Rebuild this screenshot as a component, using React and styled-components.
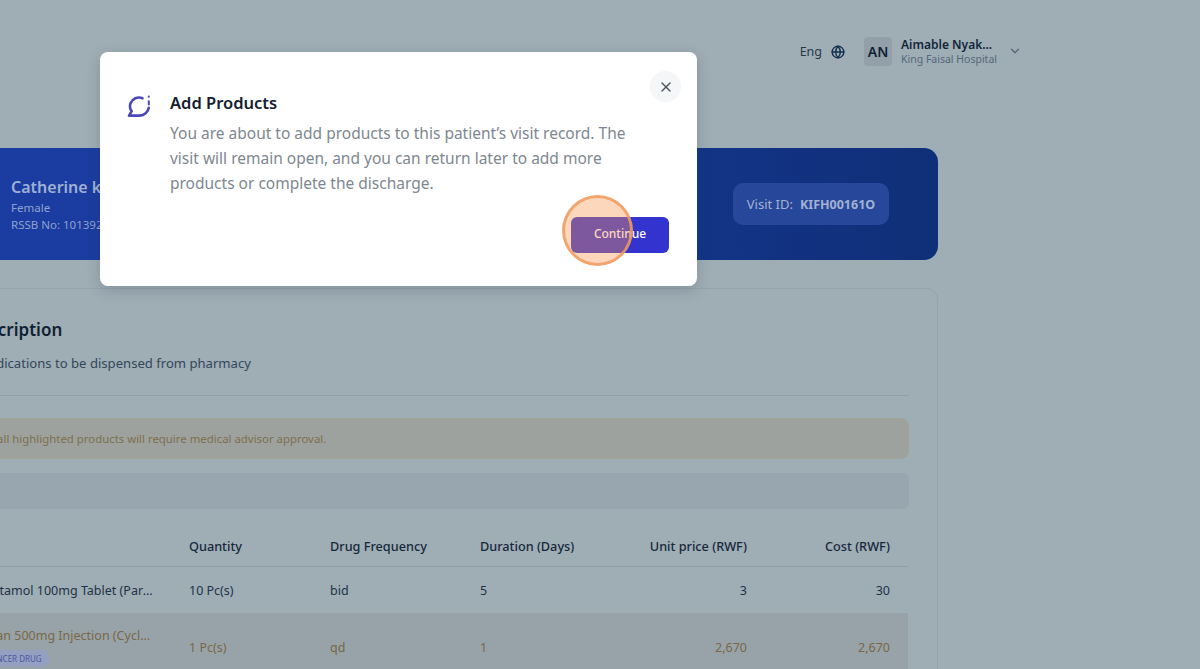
import React from 'react';
import styled, { createGlobalStyle } from 'styled-components';
import { ChevronDown, Globe, X } from 'lucide-react';

const GlobalStyle = createGlobalStyle`
	html, body {
		margin: 0;
		padding: 0;
		height: 100%;
	}
	body {
		font-family: "Noto Sans", "Open Sans", sans-serif;
		background: #9fadb5;
		overflow: hidden;
	}
	* {
		box-sizing: border-box;
	}
`;

const Page = styled.div`
	position: relative;
	width: 1200px;
	height: 669px;
	overflow: hidden;
	background: #9fadb5;
`;

const TopBar = styled.header`
	height: 148px;
	display: flex;
	justify-content: flex-end;
	align-items: flex-start;
	padding: 37px 178px 0 0;
`;

const LangPicker = styled.div`
	display: flex;
	align-items: center;
	gap: 9px;
	height: 29px;
	margin-right: 19px;
	font-size: 12.5px;
	color: #27394a;
	svg {
		color: #14304f;
	}
`;

const Avatar = styled.div`
	width: 28px;
	height: 29px;
	border-radius: 4px;
	background: #939fa9;
	color: #0f2233;
	font-size: 14px;
	font-weight: 600;
	display: flex;
	align-items: center;
	justify-content: center;
	margin-right: 9px;
`;

const UserInfo = styled.div`
	display: flex;
	flex-direction: column;
	width: 103px;
	margin-right: 4px;
`;

const UserName = styled.div`
	font-size: 12px;
	font-weight: 600;
	line-height: 15px;
	color: #12263a;
`;

const UserOrg = styled.div`
	font-size: 10.5px;
	line-height: 15px;
	color: #55677a;
`;

const Chevron = styled(ChevronDown)`
	margin-top: 7px;
	color: #4f6172;
`;

const Main = styled.main`
	width: 1028px;
	margin-left: -90px;
`;

const Banner = styled.section`
	height: 112px;
	border-radius: 0 14px 14px 0;
	background: linear-gradient(90deg, #1b3da3 0%, #1a3b9c 40%, #0f2f78 100%);
	display: flex;
	align-items: center;
	justify-content: space-between;
	padding: 0 49px 0 101px;
`;

const Patient = styled.div`
	display: flex;
	flex-direction: column;
`;

const PatientName = styled.div`
	font-size: 16px;
	font-weight: 600;
	line-height: 24px;
	color: #9fb0d4;
`;

const PatientMeta = styled.div`
	font-size: 11.5px;
	line-height: 17px;
	color: #8fa2cc;
`;

const VisitPill = styled.div`
	width: 156px;
	height: 42px;
	border-radius: 10px;
	background: #27479a;
	display: flex;
	align-items: center;
	justify-content: center;
	gap: 7px;
	font-size: 13px;
	color: #a3b2d2;
	b {
		font-size: 12.5px;
		font-weight: 700;
	}
`;

const Card = styled.section`
	margin-top: 28px;
	height: 420px;
	border: 1px solid #95a4ad;
	border-radius: 12px;
	padding: 0 28px 0 27px;
`;

const CardHead = styled.div`
	padding: 28px 0 22px 24px;
	border-bottom: 1px solid #8f9ea8;
	margin-bottom: 22px;
`;

const CardTitle = styled.h2`
	margin: 0;
	font-size: 17px;
	line-height: 25px;
	font-weight: 600;
	color: #0f2233;
`;

const CardText = styled.p`
	margin: 11px 0 0 -4px;
	font-size: 13.1px;
	line-height: 20px;
	color: #33485a;
`;

const Alert = styled.div`
	height: 41px;
	border: 1px solid #a2a593;
	border-radius: 8px;
	background: #9da29f;
	display: flex;
	align-items: center;
	padding-left: 26px;
	font-size: 11.4px;
	color: #7f6f4c;
`;

const FilterBar = styled.div`
	height: 36px;
	margin-top: 14px;
	border-radius: 6px;
	background: #98a7af;
`;

const TableRow = styled.div`
	display: grid;
	grid-template-columns: 233px 141px 150px 150px 153px 143px;
	align-items: center;
	width: 970px;
	height: ${(p) => p.$height}px;
	border-bottom: ${(p) => (p.$line ? '1px solid #8f9ea8' : 'none')};
	background: ${(p) => (p.$flagged ? '#98a3a9' : 'transparent')};
	color: ${(p) => (p.$flagged ? '#786845' : '#1f3346')};
`;

const HeadCell = styled.div`
	padding: 17px 18px 0;
	font-size: 12.7px;
	font-weight: 500;
	color: #16293b;
	text-align: ${(p) => (p.$right ? 'right' : 'left')};
`;

const Cell = styled.div`
	padding: 0 18px;
	font-size: 12.5px;
	text-align: ${(p) => (p.$right ? 'right' : 'left')};
`;

const ProductCell = styled.div`
	padding: 0 18px 0 22px;
	font-size: 12.5px;
	min-width: 0;
	display: flex;
	flex-direction: column;
	align-items: flex-start;
	gap: 6px;
`;

const ProductName = styled.span`
	display: block;
	width: 100%;
	white-space: nowrap;
	overflow: hidden;
	text-overflow: ellipsis;
`;

const DrugTag = styled.span`
	height: 17px;
	padding: 0 8px;
	border-radius: 9px;
	background: #959fc0;
	color: #4d57a3;
	font-size: 8px;
	line-height: 17px;
	white-space: nowrap;
`;

const Modal = styled.div`
	position: absolute;
	left: 100px;
	top: 52px;
	width: 597px;
	height: 234px;
	background: #fff;
	border-radius: 8px;
	box-shadow: 0 4px 14px rgba(40, 55, 70, 0.22);
	display: flex;
	padding: 39px 28px 0 27px;
`;

const ModalIcon = styled.div`
	flex: none;
	width: 43px;
	padding-top: 3px;
	color: #4b48b5;
`;

const ModalBody = styled.div`
	flex: 1;
	display: flex;
	flex-direction: column;
`;

const ModalTitle = styled.h3`
	margin: 0 0 6px;
	font-size: 16.5px;
	line-height: 24px;
	font-weight: 600;
	color: #14202e;
`;

const ModalText = styled.p`
	margin: 0;
	width: 470px;
	font-size: 15.5px;
	line-height: 25px;
	color: #7e8790;
`;

const ModalActions = styled.div`
	display: flex;
	justify-content: flex-end;
	margin-top: 21px;
`;

const CloseButton = styled.button`
	position: absolute;
	top: 19px;
	right: 16px;
	width: 31px;
	height: 31px;
	padding: 0;
	border: none;
	border-radius: 50%;
	background: #f5f6f7;
	color: #4a5560;
	display: flex;
	align-items: center;
	justify-content: center;
`;

const PrimaryButton = styled.button`
	width: 98px;
	height: 36px;
	padding: 0 0 3px;
	border: none;
	border-radius: 6px;
	background: #3333cf;
	color: #fff;
	font-family: inherit;
	font-size: 12px;
	font-weight: 500;
`;

const ClickHighlight = styled.div`
	position: absolute;
	left: 562px;
	top: 195px;
	width: 71px;
	height: 71px;
	border-radius: 50%;
	border: 3px solid rgba(240, 155, 95, 0.85);
	background: rgba(250, 150, 80, 0.38);
	pointer-events: none;
`;

const ChatInfoIcon = () => (
	<svg width="24" height="24" viewBox="0 0 24 24" fill="none" stroke="currentColor" strokeWidth="2.6" strokeLinecap="round" strokeLinejoin="round">
		<path d="M15.5 4.2A9.2 9.2 0 0 0 3.4 9.5c-.9 2.8-.3 5.6 1.3 7.6L2 21.6h10.6c4.6-.2 8.5-3.4 9.2-7.8" />
		<path d="M21.8 7.2v3.2" strokeWidth="2" />
		<path d="M21.8 2.4v.4" strokeWidth="2" />
	</svg>
);

const App = () => {
	return (
		<Page>
			<GlobalStyle />
			<TopBar>
				<LangPicker>
					Eng
					<Globe size={14} strokeWidth={2.4} />
				</LangPicker>
				<Avatar>AN</Avatar>
				<UserInfo>
					<UserName>Aimable Nyak...</UserName>
					<UserOrg>King Faisal Hospital</UserOrg>
				</UserInfo>
				<Chevron size={14} />
			</TopBar>

			<Main>
				<Banner>
					<Patient>
						<PatientName>Catherine kayitesi</PatientName>
						<PatientMeta>Female</PatientMeta>
						<PatientMeta>RSSB No: 10139201</PatientMeta>
					</Patient>
					<VisitPill>
						Visit ID: <b>KIFH00161O</b>
					</VisitPill>
				</Banner>

				<Card>
					<CardHead>
						<CardTitle>Prescription</CardTitle>
						<CardText>All medications to be dispensed from pharmacy</CardText>
					</CardHead>
					<Alert>Note: all highlighted products will require medical advisor approval.</Alert>
					<FilterBar />
					<TableRow $height={58} $line>
						<HeadCell>Drug</HeadCell>
						<HeadCell>Quantity</HeadCell>
						<HeadCell>Drug Frequency</HeadCell>
						<HeadCell>Duration (Days)</HeadCell>
						<HeadCell $right>Unit price (RWF)</HeadCell>
						<HeadCell $right>Cost (RWF)</HeadCell>
					</TableRow>
					<TableRow $height={46}>
						<ProductCell>
							<ProductName>Paracetamol 100mg Tablet (Paracetamol)</ProductName>
						</ProductCell>
						<Cell>10 Pc(s)</Cell>
						<Cell>bid</Cell>
						<Cell>5</Cell>
						<Cell $right>3</Cell>
						<Cell $right>30</Cell>
					</TableRow>
					<TableRow $height={68} $flagged>
						<ProductCell>
							<ProductName>Endoxan 500mg Injection (Cyclophosphamide)</ProductName>
							<DrugTag>ANTICANCER DRUG</DrugTag>
						</ProductCell>
						<Cell>1 Pc(s)</Cell>
						<Cell>qd</Cell>
						<Cell>1</Cell>
						<Cell $right>2,670</Cell>
						<Cell $right>2,670</Cell>
					</TableRow>
				</Card>
			</Main>

			<Modal>
				<ModalIcon>
					<ChatInfoIcon />
				</ModalIcon>
				<ModalBody>
					<ModalTitle>Add Products</ModalTitle>
					<ModalText>
						You are about to add products to this patient’s visit record. The visit will remain open, and you can return later to add more products or complete the discharge.
					</ModalText>
					<ModalActions>
						<PrimaryButton>Continue</PrimaryButton>
					</ModalActions>
				</ModalBody>
				<CloseButton aria-label="Close">
					<X size={16} />
				</CloseButton>
			</Modal>
			<ClickHighlight />
		</Page>
	);
};

export default App;
